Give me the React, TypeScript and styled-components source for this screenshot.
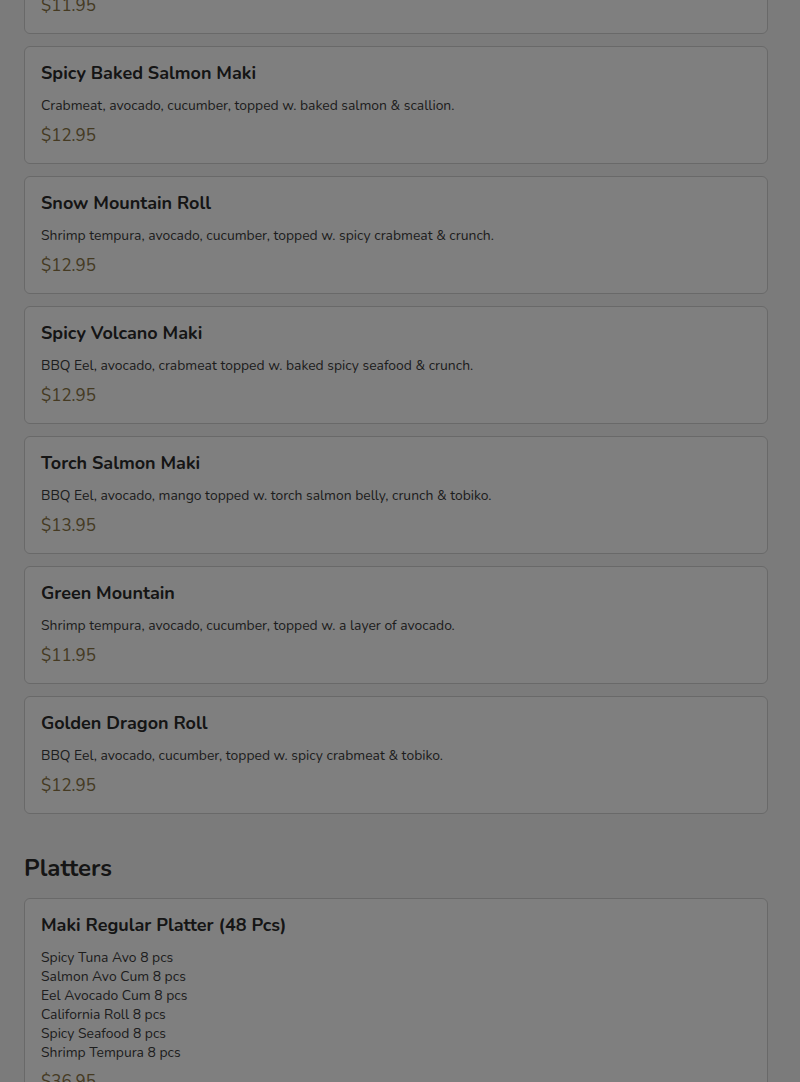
import React from 'react'
import styled, { createGlobalStyle } from 'styled-components'

type Item = {
    name: string
    desc?: string
    lines?: string[]
    price: string
}

const rolls: Item[] = [
    { name: 'Rainbow Roll', desc: 'Crabmeat, avocado, cucumber, topped w. assorted fish.', price: '$11.95' },
    { name: 'Spicy Baked Salmon Maki', desc: 'Crabmeat, avocado, cucumber, topped w. baked salmon & scallion.', price: '$12.95' },
    { name: 'Snow Mountain Roll', desc: 'Shrimp tempura, avocado, cucumber, topped w. spicy crabmeat & crunch.', price: '$12.95' },
    { name: 'Spicy Volcano Maki', desc: 'BBQ Eel, avocado, crabmeat topped w. baked spicy seafood & crunch.', price: '$12.95' },
    { name: 'Torch Salmon Maki', desc: 'BBQ Eel, avocado, mango topped w. torch salmon belly, crunch & tobiko.', price: '$13.95' },
    { name: 'Green Mountain', desc: 'Shrimp tempura, avocado, cucumber, topped w. a layer of avocado.', price: '$11.95' },
    { name: 'Golden Dragon Roll', desc: 'BBQ Eel, avocado, cucumber, topped w. spicy crabmeat & tobiko.', price: '$12.95' },
]

const platters: Item[] = [
    {
        name: 'Maki Regular Platter (48 Pcs)',
        lines: [
            'Spicy Tuna Avo 8 pcs',
            'Salmon Avo Cum 8 pcs',
            'Eel Avocado Cum 8 pcs',
            'California Roll 8 pcs',
            'Spicy Seafood 8 pcs',
            'Shrimp Tempura 8 pcs',
        ],
        price: '$36.95',
    },
]

function MenuCard(props: { item: Item }) {
    const { item } = props
    return (
        <Card>
            <Name>{item.name}</Name>
            {item.desc && <Desc>{item.desc}</Desc>}
            {item.lines && (
                <List>
                    {item.lines.map((l) => (
                        <li key={l}>{l}</li>
                    ))}
                </List>
            )}
            <Price>{item.price}</Price>
        </Card>
    )
}

export default function App() {
    return (
        <>
            <Global />
            <Page>
                <Section>
                    {rolls.map((r) => (
                        <MenuCard key={r.name} item={r} />
                    ))}
                </Section>
                <Heading>Platters</Heading>
                <Section>
                    {platters.map((p) => (
                        <MenuCard key={p.name} item={p} />
                    ))}
                </Section>
            </Page>
            <Backdrop />
        </>
    )
}

const Global = createGlobalStyle`
  html, body {
    margin: 0;
    padding: 0;
    background: #f6f6f6;
    height: 1082px;
    overflow: hidden;
  }
  body {
    font-family: "Nunito", "Lato", "Noto Sans", sans-serif;
    color: #333;
  }
`

const Page = styled.div`
  padding: 0 32px 0 24px;
  margin-top: -84px;
`

const Section = styled.div`
  display: flex;
  flex-direction: column;
  gap: 12px;
`

const Card = styled.div`
  background: #fff;
  border: 1px solid #d2d2d2;
  border-radius: 6px;
  padding: 13px 16px 16px;
`

const Name = styled.div`
  font-size: 18px;
  font-weight: 700;
  line-height: 26px;
  color: #2a2a2a;
`

const Desc = styled.div`
  font-size: 13.9px;
  line-height: 20px;
  margin-top: 10px;
  color: #3a3a3a;
`

const List = styled.ul`
  list-style: none;
  margin: 10px 0 0;
  padding: 0;
  font-size: 13.9px;
  line-height: 19px;
  color: #3a3a3a;
`

const Price = styled.div`
  font-size: 17px;
  line-height: 22px;
  margin-top: 9px;
  color: #8a7545;
`

const Heading = styled.h2`
  margin: 38px 0 14px;
  font-size: 24px;
  line-height: 32px;
  font-weight: 700;
  color: #2a2a2a;
`

const Backdrop = styled.div`
  position: fixed;
  inset: 0;
  background: rgba(0, 0, 0, 0.5);
`
